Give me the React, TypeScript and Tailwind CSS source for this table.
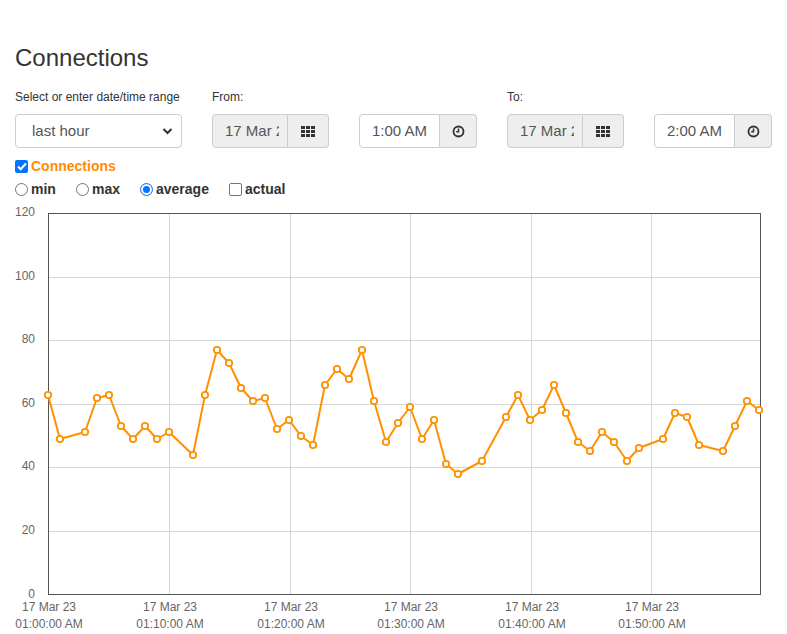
import React from "react";

const points: [number, number][] = [
  [48, 395], [60, 439], [85, 432], [97, 398], [109, 395], [121, 426], [133, 439], [145, 426],
  [157, 439], [169, 432], [193, 455], [205, 395], [217, 350], [229, 363], [241, 388], [253, 401],
  [265, 398], [277, 429], [289, 420], [301, 436], [313, 445], [325, 385], [337, 369], [349, 379],
  [362, 350], [374, 401], [386, 442], [398, 423], [410, 407], [422, 439], [434, 420], [446, 464],
  [458, 474], [482, 461], [506, 417], [518, 395], [530, 420], [542, 410], [554, 385], [566, 413],
  [578, 442], [590, 451], [602, 432], [614, 442], [627, 461], [639, 448], [663, 439], [675, 413],
  [687, 417], [699, 445], [723, 451], [735, 426], [747, 401], [759, 410],
];

const yTicks = [
  { v: "120", y: 213 },
  { v: "100", y: 277 },
  { v: "80", y: 340 },
  { v: "60", y: 404 },
  { v: "40", y: 467 },
  { v: "20", y: 531 },
  { v: "0", y: 595 },
];

const xTicks = [
  { x: 48, t: "01:00:00 AM" },
  { x: 169, t: "01:10:00 AM" },
  { x: 290, t: "01:20:00 AM" },
  { x: 410, t: "01:30:00 AM" },
  { x: 531, t: "01:40:00 AM" },
  { x: 651, t: "01:50:00 AM" },
];

function GridIcon() {
  return (
    <svg width="14" height="11" viewBox="0 0 14 11" fill="#333">
      {[0, 5, 10].map((x) =>
        [0, 4, 8].map((y) => <rect key={`${x}-${y}`} x={x} y={y} width="4" height="3" />)
      )}
    </svg>
  );
}

function ClockIcon() {
  return (
    <svg width="13" height="13" viewBox="0 0 13 13" fill="none" stroke="#333">
      <circle cx="6.5" cy="6.5" r="5" strokeWidth="1.8" />
      <path d="M6.5 3.5v3.2H4.2" strokeWidth="1.5" />
    </svg>
  );
}

function DateGroup() {
  return (
    <div className="flex h-[34px] w-[117px]">
      <div className="flex w-[76px] items-center rounded-l border border-[#ccc] bg-[#eee] pl-3 text-[15px] text-[#555]">
        <span className="block w-[54px] overflow-hidden whitespace-nowrap">17 Mar 23</span>
      </div>
      <div className="flex flex-1 items-center justify-center rounded-r border border-l-0 border-[#ccc] bg-[#eee]">
        <GridIcon />
      </div>
    </div>
  );
}

function TimeGroup({ value }: { value: string }) {
  return (
    <div className="flex h-[34px] w-[118px]">
      <div className="flex w-[81px] items-center justify-center rounded-l border border-[#ccc] bg-white text-[15px] text-[#555]">
        {value}
      </div>
      <div className="flex flex-1 items-center justify-center rounded-r border border-l-0 border-[#ccc] bg-[#eee]">
        <ClockIcon />
      </div>
    </div>
  );
}

function Radio({ checked }: { checked?: boolean }) {
  return (
    <span
      className={`inline-block h-[13px] w-[13px] rounded-full border ${
        checked ? "border-[#0075ff] bg-white shadow-[inset_0_0_0_2px_white,inset_0_0_0_7px_#0075ff]" : "border-[#767676] bg-white"
      }`}
    />
  );
}

export default function App() {
  const path = points.map(([x, y], i) => `${i ? "L" : "M"}${x} ${y}`).join(" ");
  return (
    <div className="relative h-[634px] w-[787px] overflow-hidden bg-white font-['Liberation_Sans',Arial,sans-serif] text-[#333]">
      <h1 className="pl-[15px] pt-[43px] text-[24px] leading-[30px]">Connections</h1>

      <div className="mt-[17px] flex gap-[30px] pl-[15px] text-[12px] leading-[14px]">
        <div className="w-[167px]">Select or enter date/time range</div>
        <div className="w-[265px]">From:</div>
        <div>To:</div>
      </div>

      <div className="mt-[10px] flex gap-[30px] pl-[15px]">
        <div className="flex h-[34px] w-[167px] items-center justify-between rounded border border-[#ccc] bg-white pl-4 pr-2 text-[15px] text-[#555]">
          <span>last hour</span>
          <svg width="11" height="8" viewBox="0 0 11 8" fill="none" stroke="#333" strokeWidth="2">
            <path d="M1.5 2l4 4 4-4" />
          </svg>
        </div>
        <DateGroup />
        <TimeGroup value="1:00 AM" />
        <DateGroup />
        <TimeGroup value="2:00 AM" />
      </div>

      <div className="mt-[10px] flex items-center gap-[3px] pl-[15px]">
        <span className="flex h-[13px] w-[13px] items-center justify-center rounded-[2px] bg-[#0075ff]">
          <svg width="10" height="9" viewBox="0 0 10 9" fill="none" stroke="white" strokeWidth="2">
            <path d="M1 4.5l2.7 2.7L9 1.5" />
          </svg>
        </span>
        <span className="text-[14px] font-bold leading-[16px] text-[#ff8c00]">Connections</span>
      </div>

      <div className="mt-[7px] flex items-center pl-[15px] text-[14px] font-bold leading-[16px]">
        <Radio />
        <span className="ml-[3px] w-[45px]">min</span>
        <Radio />
        <span className="ml-[3px] w-[48px]">max</span>
        <Radio checked />
        <span className="ml-[3px] w-[73px]">average</span>
        <span className="inline-block h-[13px] w-[13px] rounded-[2px] border border-[#767676] bg-white" />
        <span className="ml-[3px]">actual</span>
      </div>

      <svg className="mt-[3px] block" width="787" height="434" viewBox="0 200 787 434">
        <g stroke="#d6d6d6" strokeWidth="1">
          {yTicks.slice(1, 6).map((t) => (
            <line key={t.v} x1="48" x2="760" y1={t.y + 0.5} y2={t.y + 0.5} />
          ))}
          {xTicks.slice(1).map((t) => (
            <line key={t.x} x1={t.x + 0.5} x2={t.x + 0.5} y1="213" y2="595" />
          ))}
        </g>
        <rect x="48.5" y="213.5" width="712" height="381" fill="none" stroke="#555" strokeWidth="1" />
        <g fontFamily="'Liberation Sans', Arial, sans-serif" fontSize="12" fill="#666">
          {yTicks.map((t) => (
            <text key={t.v} x="35" y={t.y + 3} textAnchor="end">
              {t.v}
            </text>
          ))}
          {xTicks.map((t) => (
            <g key={t.x}>
              <text x={t.x + 1} y="611" textAnchor="middle">17 Mar 23</text>
              <text x={t.x + 1} y="628" textAnchor="middle">{t.t}</text>
            </g>
          ))}
        </g>
        <path d={path} fill="none" stroke="#ff9100" strokeWidth="2" strokeLinejoin="round" />
        {points.map(([x, y], i) => (
          <circle key={i} cx={x} cy={y} r="3.2" fill="white" stroke="#ff9100" strokeWidth="1.8" />
        ))}
      </svg>
    </div>
  );
}
